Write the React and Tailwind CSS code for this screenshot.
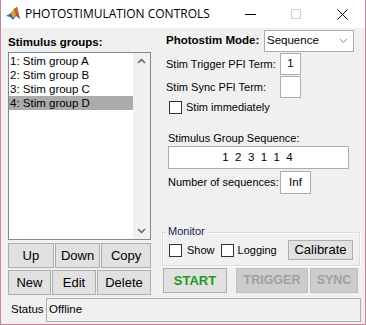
import React from 'react';

const groups = ['1: Stim group A', '2: Stim group B', '3: Stim group C', '4: Stim group D'];

function MatlabIcon() {
  return (
    <svg width="16" height="16" viewBox="0 0 16 16">
      <path d="M1 10 L6 7 L9 3 L12 1 L15 13 L11 10 L8 14 L5 11 Z" fill="#3a6fb5" />
      <path d="M9 3 L12 1 L15 13 L12 9 Z" fill="#e05a1a" />
      <path d="M6 7 L9 3 L11 9 L8 12 Z" fill="#f59a2a" />
    </svg>
  );
}

function Btn({ children, className = '' }) {
  return (
    <div className={`flex items-center justify-center bg-[#e1e1e1] border border-[#adadad] text-[13px] ${className}`}>
      {children}
    </div>
  );
}

function Check({ className = '' }) {
  return <div className={`w-[13px] h-[13px] border border-[#333] bg-white ${className}`} />;
}

export default function App() {
  return (
    <div className="w-[366px] h-[325px] flex flex-col border-x border-b border-[#c98399] bg-[#f0f0f0] font-['Liberation_Sans',Arial,sans-serif] text-black overflow-hidden">
      {/* title bar */}
      <div className="h-[28px] bg-white flex items-center shrink-0">
        <div className="ml-[4px]"><MatlabIcon /></div>
        <div className="ml-[4px] text-[12px] font-['Open_Sans',sans-serif]">PHOTOSTIMULATION CONTROLS</div>
        <div className="ml-auto flex items-center">
          <div className="w-[46px] flex justify-center"><div className="w-[11px] h-px bg-black" /></div>
          <div className="w-[46px] flex justify-center"><div className="w-[10px] h-[10px] border border-[#cfcfcf]" /></div>
          <div className="w-[46px] flex justify-center">
            <svg width="11" height="11" viewBox="0 0 11 11"><path d="M0.5 0.5 L10.5 10.5 M10.5 0.5 L0.5 10.5" stroke="#000" strokeWidth="1" /></svg>
          </div>
        </div>
      </div>

      {/* body */}
      <div className="flex-1 flex flex-col">
        <div className="flex h-[268px]">
          {/* left column */}
          <div className="ml-[7px] w-[143px] flex flex-col">
            <div className="mt-[6px] h-[16px] text-[11.5px] font-bold leading-[16px]">Stimulus groups:</div>
            <div className="mt-[2px] h-[188px] border border-[#828790] bg-white flex">
              <div className="flex-1 pt-px">
                {groups.map((g, i) => (
                  <div key={g} className={`h-[14px] leading-[14px] pl-px text-[11.5px] ${i === 3 ? 'bg-[#ababab]' : ''}`}>{g}</div>
                ))}
              </div>
              <div className="w-[17px] bg-[#f0f0f0] flex flex-col items-center justify-between py-[5px]">
                <svg width="9" height="6" viewBox="0 0 9 6"><path d="M1 5 L4.5 1.5 L8 5" stroke="#606060" strokeWidth="1.5" fill="none" /></svg>
                <svg width="9" height="6" viewBox="0 0 9 6"><path d="M1 1 L4.5 4.5 L8 1" stroke="#606060" strokeWidth="1.5" fill="none" /></svg>
              </div>
            </div>
            <div className="mt-[3px] flex gap-[1px]">
              <Btn className="w-[46px] h-[25px]">Up</Btn>
              <Btn className="w-[46px] h-[25px]">Down</Btn>
              <Btn className="w-[50px] h-[25px]">Copy</Btn>
            </div>
            <div className="mt-[2px] flex gap-[1px]">
              <Btn className="w-[43px] h-[25px]">New</Btn>
              <Btn className="w-[44px] h-[25px]">Edit</Btn>
              <Btn className="w-[54px] h-[25px]">Delete</Btn>
            </div>
          </div>

          {/* right column */}
          <div className="ml-[11px] w-[198px] flex flex-col">
            <div className="mt-[2px] flex items-center">
              <div className="ml-[4px] text-[11.5px] font-bold w-[98px]">Photostim Mode:</div>
              <div className="w-[90px] h-[22px] border border-[#adadad] bg-white flex items-center pl-[2px] text-[11.5px]">
                <span className="flex-1">Sequence</span>
                <svg className="mr-[5px]" width="9" height="6" viewBox="0 0 9 6"><path d="M1 1 L4.5 4.5 L8 1" stroke="#888" strokeWidth="1" fill="none" /></svg>
              </div>
            </div>
            <div className="mt-[1px] flex items-center">
              <div className="ml-[4px] w-[114px] text-[11px]">Stim Trigger PFI Term:</div>
              <div className="w-[21px] h-[22px] border border-[#adadad] bg-white flex items-center justify-center text-[11.5px]">1</div>
            </div>
            <div className="mt-px flex items-center">
              <div className="ml-[4px] w-[114px] text-[11px]">Stim Sync PFI Term:</div>
              <div className="w-[21px] h-[22px] border border-[#adadad] bg-white" />
            </div>
            <div className="mt-[3px] ml-[7px] flex items-center h-[13px]">
              <Check />
              <span className="ml-[4px] text-[11px]">Stim immediately</span>
            </div>
            <div className="mt-[18px] ml-[6px] text-[11px] leading-[13px]">Stimulus Group Sequence:</div>
            <div className="mt-[1px] ml-[6px] w-[181px] h-[23px] border border-[#adadad] bg-white flex items-center justify-center text-[11.5px] pr-[2px]">
              <span className="whitespace-pre">1  2  3  1  1  4</span>
            </div>
            <div className="mt-[2px] ml-[6px] flex items-center">
              <div className="w-[112px] text-[11px]">Number of sequences:</div>
              <div className="w-[31px] h-[23px] border border-[#adadad] bg-white flex items-center justify-center text-[11.5px]">Inf</div>
            </div>

            {/* monitor group */}
            <div className="mt-[38px] relative h-[34px] border border-[#dcdcdc] shadow-[inset_1px_1px_0_#fff,1px_1px_0_#fff] flex items-center">
              <span className="absolute -top-[8px] left-[3px] px-[2px] bg-[#f0f0f0] text-[11px] leading-[13px] text-[#1a1a50]">Monitor</span>
              <div className="ml-[6px] mt-[2px] flex items-center">
                <Check />
                <span className="ml-[5px] text-[11px]">Show</span>
                <Check className="ml-[6px]" />
                <span className="ml-[4px] text-[11px]">Logging</span>
              </div>
              <Btn className="ml-auto mr-[6px] mt-[2px] w-[65px] h-[20px] text-[12.5px]">Calibrate</Btn>
            </div>
            <div className="mt-[2px] flex">
              <Btn className="ml-[1px] w-[64px] h-[25px] font-bold text-[#1f9a1f] text-[12.5px]">START</Btn>
              <div className="ml-[9px] w-[72px] h-[25px] bg-[#cccccc] border border-[#bfbfbf] flex items-center justify-center font-bold text-[12.5px] text-[#a0a0a0]">TRIGGER</div>
              <div className="ml-[2px] w-[48px] h-[25px] bg-[#cccccc] border border-[#bfbfbf] flex items-center justify-center font-bold text-[12.5px] text-[#a0a0a0]">SYNC</div>
            </div>
          </div>
        </div>

        {/* status */}
        <div className="mt-[2px] flex items-center">
          <span className="ml-[10px] w-[35px] text-[11.5px]">Status</span>
          <div className="w-[315px] h-[24px] border border-[#adadad] flex items-center pl-[2px] text-[11.5px]">Offline</div>
        </div>
      </div>
    </div>
  );
}
